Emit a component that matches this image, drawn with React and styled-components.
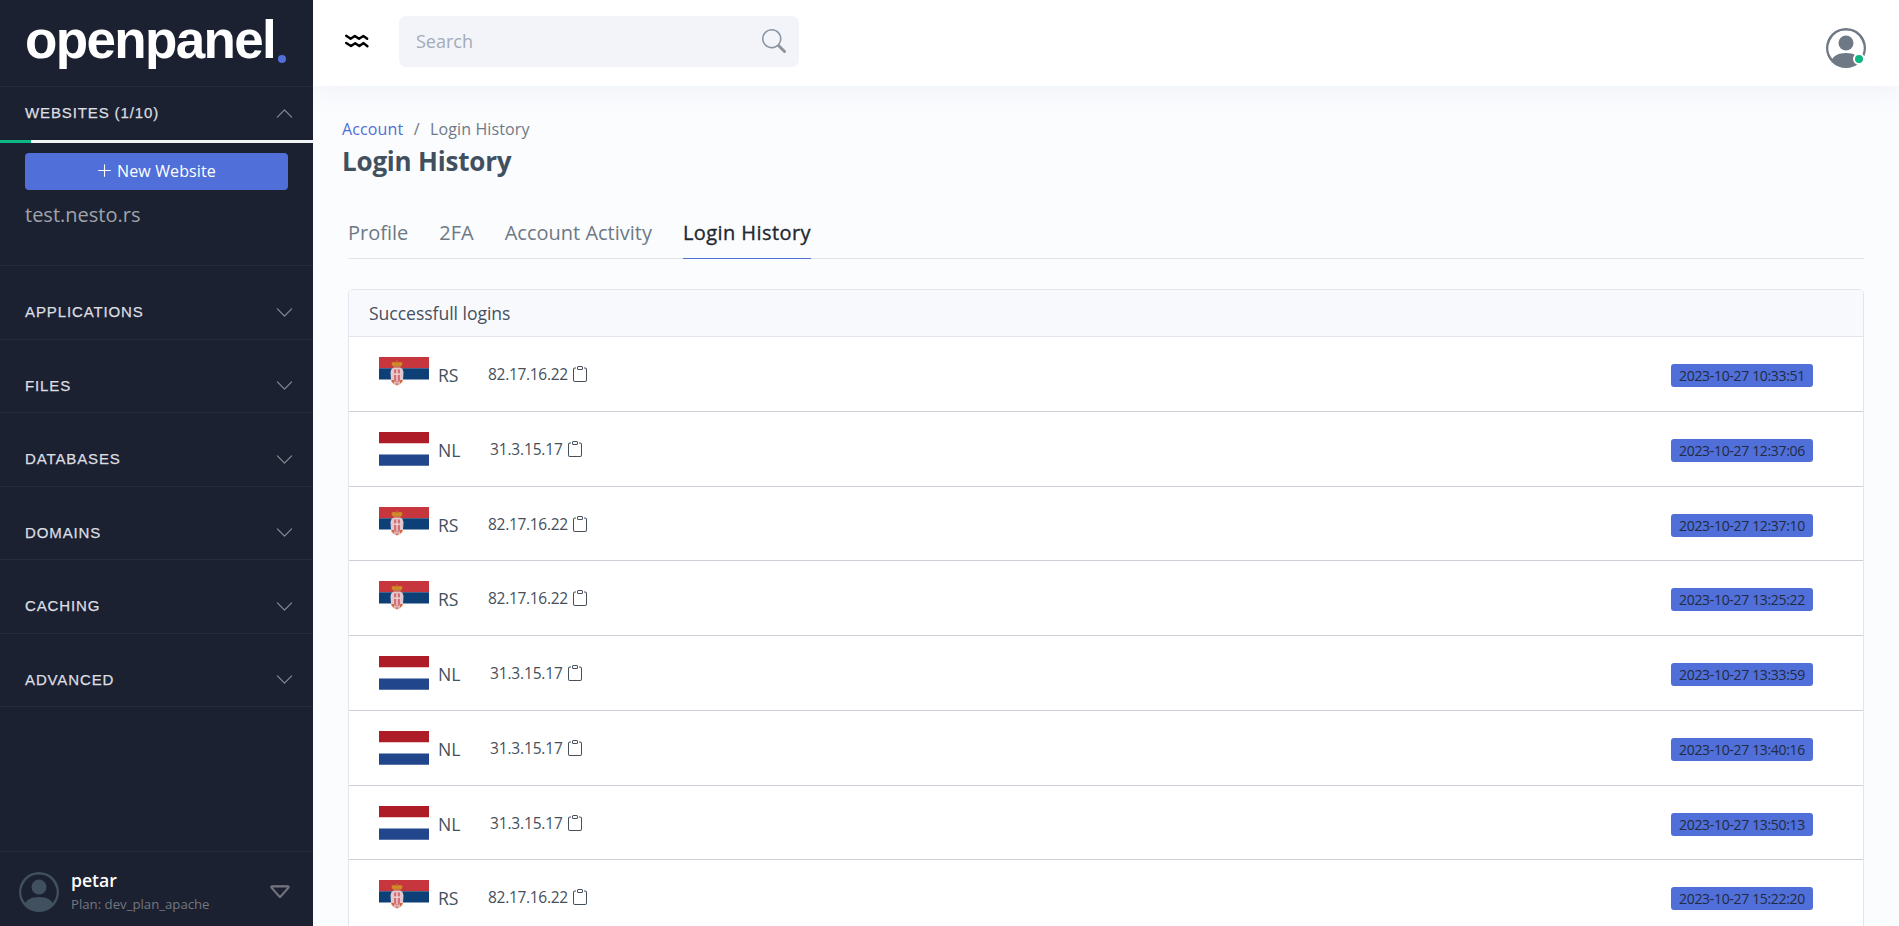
import React from "react";
import styled, { createGlobalStyle } from "styled-components";
import { BsPersonCircle, BsClipboard, BsChevronDown, BsChevronUp, BsSearch, BsPlusLg, BsCaretDown } from "react-icons/bs";

const GlobalStyle = createGlobalStyle`
  *, *::before, *::after { box-sizing: border-box; }
  body {
    margin: 0;
    height: 926px;
    overflow: hidden;
    background: #fbfcfe;
    color: #45505d;
    font-family: "Open Sans", "Noto Sans", sans-serif;
  }
  h1, p, ul { margin: 0; padding: 0; }
  svg { display: block; flex: none; }
`;

const Page = styled.div`
  display: flex;
  width: 1899px;
  height: 926px;
  overflow: hidden;
`;

const Sidebar = styled.aside`
  position: relative;
  z-index: 1;
  display: flex;
  flex-direction: column;
  flex: none;
  width: 313px;
  height: 926px;
  background: #1b2130;
`;

const Logo = styled.div`
  display: flex;
  align-items: baseline;
  height: 87px;
  padding: 12px 0 0 25px;
  border-bottom: 1px solid #272d3b;
  color: #fff;
  font: 700 53px/56px "Liberation Sans", Arial, sans-serif;
  letter-spacing: -1.65px;
`;

const LogoDot = styled.span`
  width: 8px;
  height: 8px;
  margin-left: 3px;
  border-radius: 50%;
  background: #506fd9;
  transform: translateY(5px);
`;

const MenuHead = styled.div`
  display: flex;
  align-items: center;
  justify-content: space-between;
  height: ${(p) => p.$height}px;
  padding: ${(p) => p.$top}px 19px ${(p) => p.$bottom || 0}px 25px;
  border-bottom: ${(p) => (p.$line ? "1px solid #272d3b" : "0")};
  color: #dcdee1;
  font: 400 15px/20px "Liberation Sans", Arial, sans-serif;
  letter-spacing: 0.88px;
  -webkit-text-stroke: 0.25px #dcdee1;
  svg { color: #868a93; }
`;

const Progress = styled.div`
  flex: none;
  height: 3px;
  background: #f3f4f7;
`;

const ProgressBar = styled.div`
  width: 10%;
  height: 3px;
  background: #0cb785;
`;

const Websites = styled.div`
  display: flex;
  flex-direction: column;
  gap: 11px;
  flex: none;
  height: 123px;
  padding: 10px 25px 0;
  border-bottom: 1px solid #272d3b;
`;

const NewButton = styled.button`
  display: flex;
  align-items: center;
  justify-content: center;
  gap: 4px;
  height: 37px;
  padding: 0 7px 2px 6px;
  border: 0;
  border-radius: 4px;
  background: #506fd9;
  color: #fff;
  font: 400 16px/24px "Open Sans", sans-serif;
  letter-spacing: 0.12px;
`;

const SiteLink = styled.a`
  color: #a0a3aa;
  font-size: 20px;
  line-height: 28px;
`;

const UserPanel = styled.div`
  display: flex;
  align-items: center;
  height: 75px;
  margin-top: auto;
  padding: 6px 20px 0 19px;
  border-top: 1px solid #272d3b;
  color: #41505f;
`;

const UserText = styled.div`
  flex: 1;
  margin-left: 12px;
`;

const UserName = styled.p`
  color: #fff;
  font-size: 17.6px;
  font-weight: 600;
  line-height: 24px;
`;

const UserPlan = styled.p`
  color: #74777f;
  font-size: 13.2px;
  line-height: 24px;
`;

const Main = styled.main`
  display: flex;
  flex-direction: column;
  flex: 1;
  min-width: 0;
`;

const TopBar = styled.header`
  display: flex;
  flex: none;
  height: 86px;
  padding: 16px 33px 0 31px;
  background: #fff;
  box-shadow: 0 0 32px rgba(78, 104, 160, 0.1);
`;

const MenuButton = styled.div`
  width: 55px;
  padding-top: 17px;
`;

const SearchBox = styled.div`
  display: flex;
  align-items: center;
  justify-content: space-between;
  width: 400px;
  height: 51px;
  padding: 0 13px 2px 17px;
  border-radius: 7px;
  background: #f3f4f9;
  color: #a3abb8;
  font-size: 18px;
  svg { color: #8b95a2; }
`;

const Avatar = styled.div`
  position: relative;
  width: 40px;
  height: 40px;
  margin: 12px 0 0 auto;
  color: #6e7985;
`;

const Status = styled.span`
  position: absolute;
  right: 1px;
  bottom: 3px;
  width: 12px;
  height: 12px;
  border: 2px solid #fff;
  border-radius: 50%;
  background: #0cb785;
`;

const Content = styled.section`
  padding: 31px 35px 0 29px;
`;

const Breadcrumb = styled.nav`
  display: flex;
  gap: 10.4px;
  color: #6e7985;
  font-size: 16px;
  letter-spacing: 0.12px;
  line-height: 24px;
`;

const Crumb = styled.span`
  color: ${(p) => (p.$link ? "#506fd9" : "inherit")};
`;

const Title = styled.h1`
  color: #41505f;
  font-size: 26px;
  font-weight: 700;
  letter-spacing: -0.2px;
  line-height: 40px;
`;

const Tabs = styled.nav`
  display: flex;
  gap: 31px;
  height: 56px;
  margin: 22px 0 0 6px;
  border-bottom: 1px solid #e2e5ec;
`;

const Tab = styled.a`
  height: 56px;
  padding-top: 16px;
  border-bottom: 1px solid ${(p) => (p.$active ? "#506fd9" : "transparent")};
  color: ${(p) => (p.$active ? "#212830" : "#6e7985")};
  font-size: 20px;
  letter-spacing: ${(p) => (p.$active ? 0.42 : 0)}px;
  -webkit-text-stroke: ${(p) => (p.$active ? "0.35px #212830" : "0")};
  line-height: 28px;
`;

const Card = styled.div`
  margin: 30px 0 0 6px;
  border: 1px solid #e2e5ec;
  border-radius: 5px 5px 0 0;
  background: #fff;
  overflow: hidden;
`;

const CardHead = styled.div`
  height: 47px;
  padding: 0 20px;
  border-bottom: 1px solid #e2e5ec;
  background: #f8f9fd;
  font-size: 17.6px;
  letter-spacing: -0.05px;
  line-height: 46px;
`;

const Row = styled.div`
  display: flex;
  align-items: flex-start;
  height: 74.75px;
  padding: 20px 50px 0 30px;
  border-bottom: 1px solid #cdd0d6;
`;

const Country = styled.span`
  width: ${(p) => p.$width}px;
  margin-left: 9px;
  font-size: 17.6px;
  line-height: 36px;
`;

const Ip = styled.span`
  display: flex;
  align-items: center;
  gap: 4px;
  height: 34px;
  font-size: 15.5px;
  letter-spacing: ${(p) => p.$spacing}px;
`;

const TimeBadge = styled.span`
  width: 142px;
  height: 23px;
  margin: 7px 0 0 auto;
  border-radius: 3px;
  background: #506fd9;
  color: #212b42;
  font-size: 14px;
  letter-spacing: -0.33px;
  line-height: 24px;
  text-align: center;
`;

const WavesIcon = () => (
  <svg width="25" height="16" viewBox="0 0 25 16" fill="none" stroke="#000" strokeWidth="2.4" strokeLinecap="round" strokeLinejoin="round">
    <path d="M2.200 2.800 6.600 5.800 10.800 3 15 5.800 19.400 3 23.200 5.800" />
    <path d="M2.200 9.900 7 13 11.200 10.200 15.400 13 19.600 10.100 23.400 13.200" />
  </svg>
);

const Netherlands = () => (
  <svg width="50" height="34" viewBox="0 0 50 34">
    <path fill="#fff" d="M0 0h50v34H0z" />
    <path fill="#ae1c28" d="M0 0h50v11.2H0z" />
    <path fill="#21468b" d="M0 22.4h50v11.3H0z" />
  </svg>
);

const Serbia = () => (
  <svg width="50" height="34" viewBox="0 0 50 34">
    <path fill="#fff" d="M0 0h50v34H0z" />
    <path fill="#c6363c" d="M0 0h50v11.2H0z" />
    <path fill="#0c4076" d="M0 11.2h50v11.2H0z" />
    <path fill="#cf8b25" d="M12.600 5.800c1.400-1.300 3.500-.9 5.400-.2 1.900-.7 4-1.100 5.400.2.300 1.300-.6 2.700-1.600 4h-7.600c-1-1.300-1.900-2.700-1.600-4z" />
    <path fill="#c6763c" d="M17.400 3.600h1.200v3h-1.200zM14.500 8.800h7v1.200h-7z" />
    <path fill="#e3c9cd" d="M12.600 11.700l2.400-1.200h6l2.400 1.200 1.100 3.300-.5 8.500c-.4 2.700-2.700 4.600-6 5.200-3.300-.6-5.600-2.500-6-5.200l-.5-8.500z" />
    <path fill="#c6363c" d="M15 12.500h6v10.200c-.8 1.800-1.800 2.600-3 2.900-1.200-.3-2.200-1.100-3-2.900z" opacity=".6" />
    <path fill="#f3dfe1" d="M17.400 12.500h1.200v12h-1.200zM15 16.500h6v1.200h-6z" />
    <path fill="#d8643c" d="M12.300 23h3v3.500c-1.700-.7-2.700-1.800-3-3.500zM20.700 23h3c-.3 1.700-1.300 2.800-3 3.500zM16 26.600h4l-2 1.700z" />
  </svg>
);

const menu = ["APPLICATIONS", "FILES", "DATABASES", "DOMAINS", "CACHING", "ADVANCED"];

const tabs = ["Profile", "2FA", "Account Activity", "Login History"];

const hosts = {
  RS: { ip: "82.17.16.22", flag: <Serbia />, width: 50, spacing: -0.3 },
  NL: { ip: "31.3.15.17", flag: <Netherlands />, width: 52, spacing: -0.16 },
};

const logins = [
  ["RS", "2023-10-27 10:33:51"],
  ["NL", "2023-10-27 12:37:06"],
  ["RS", "2023-10-27 12:37:10"],
  ["RS", "2023-10-27 13:25:22"],
  ["NL", "2023-10-27 13:33:59"],
  ["NL", "2023-10-27 13:40:16"],
  ["NL", "2023-10-27 13:50:13"],
  ["RS", "2023-10-27 15:22:20"],
];

export default function App() {
  return (
    <>
      <GlobalStyle />
      <Page>
        <Sidebar>
          <Logo>openpanel<LogoDot /></Logo>
          <MenuHead $height={53} $top={0} $bottom={1}>WEBSITES (1/10)<BsChevronUp size={19} strokeWidth={0} /></MenuHead>
          <Progress><ProgressBar /></Progress>
          <Websites>
            <NewButton><BsPlusLg size={17} />New Website</NewButton>
            <SiteLink>test.nesto.rs</SiteLink>
          </Websites>
          {menu.map((name) => (
            <MenuHead key={name} $height={73.5} $top={20} $line>{name}<BsChevronDown size={19} strokeWidth={0} /></MenuHead>
          ))}
          <UserPanel>
            <BsPersonCircle size={40} />
            <UserText>
              <UserName>petar</UserName>
              <UserPlan>Plan: dev_plan_apache</UserPlan>
            </UserText>
            <BsCaretDown size={26} color="#74777f" strokeWidth={0.35} />
          </UserPanel>
        </Sidebar>
        <Main>
          <TopBar>
            <MenuButton><WavesIcon /></MenuButton>
            <SearchBox>Search<BsSearch size={24} /></SearchBox>
            <Avatar><BsPersonCircle size={40} /><Status /></Avatar>
          </TopBar>
          <Content>
            <Breadcrumb><Crumb $link>Account</Crumb><Crumb>/</Crumb><Crumb>Login History</Crumb></Breadcrumb>
            <Title>Login History</Title>
            <Tabs>{tabs.map((t) => <Tab key={t} $active={t === "Login History"}>{t}</Tab>)}</Tabs>
            <Card>
              <CardHead>Successfull logins</CardHead>
              {logins.map(([code, time]) => (
                <Row key={time}>
                  {hosts[code].flag}
                  <Country $width={hosts[code].width}>{code}</Country>
                  <Ip $spacing={hosts[code].spacing}>{hosts[code].ip}<BsClipboard size={16} /></Ip>
                  <TimeBadge>{time}</TimeBadge>
                </Row>
              ))}
            </Card>
          </Content>
        </Main>
      </Page>
    </>
  );
}
